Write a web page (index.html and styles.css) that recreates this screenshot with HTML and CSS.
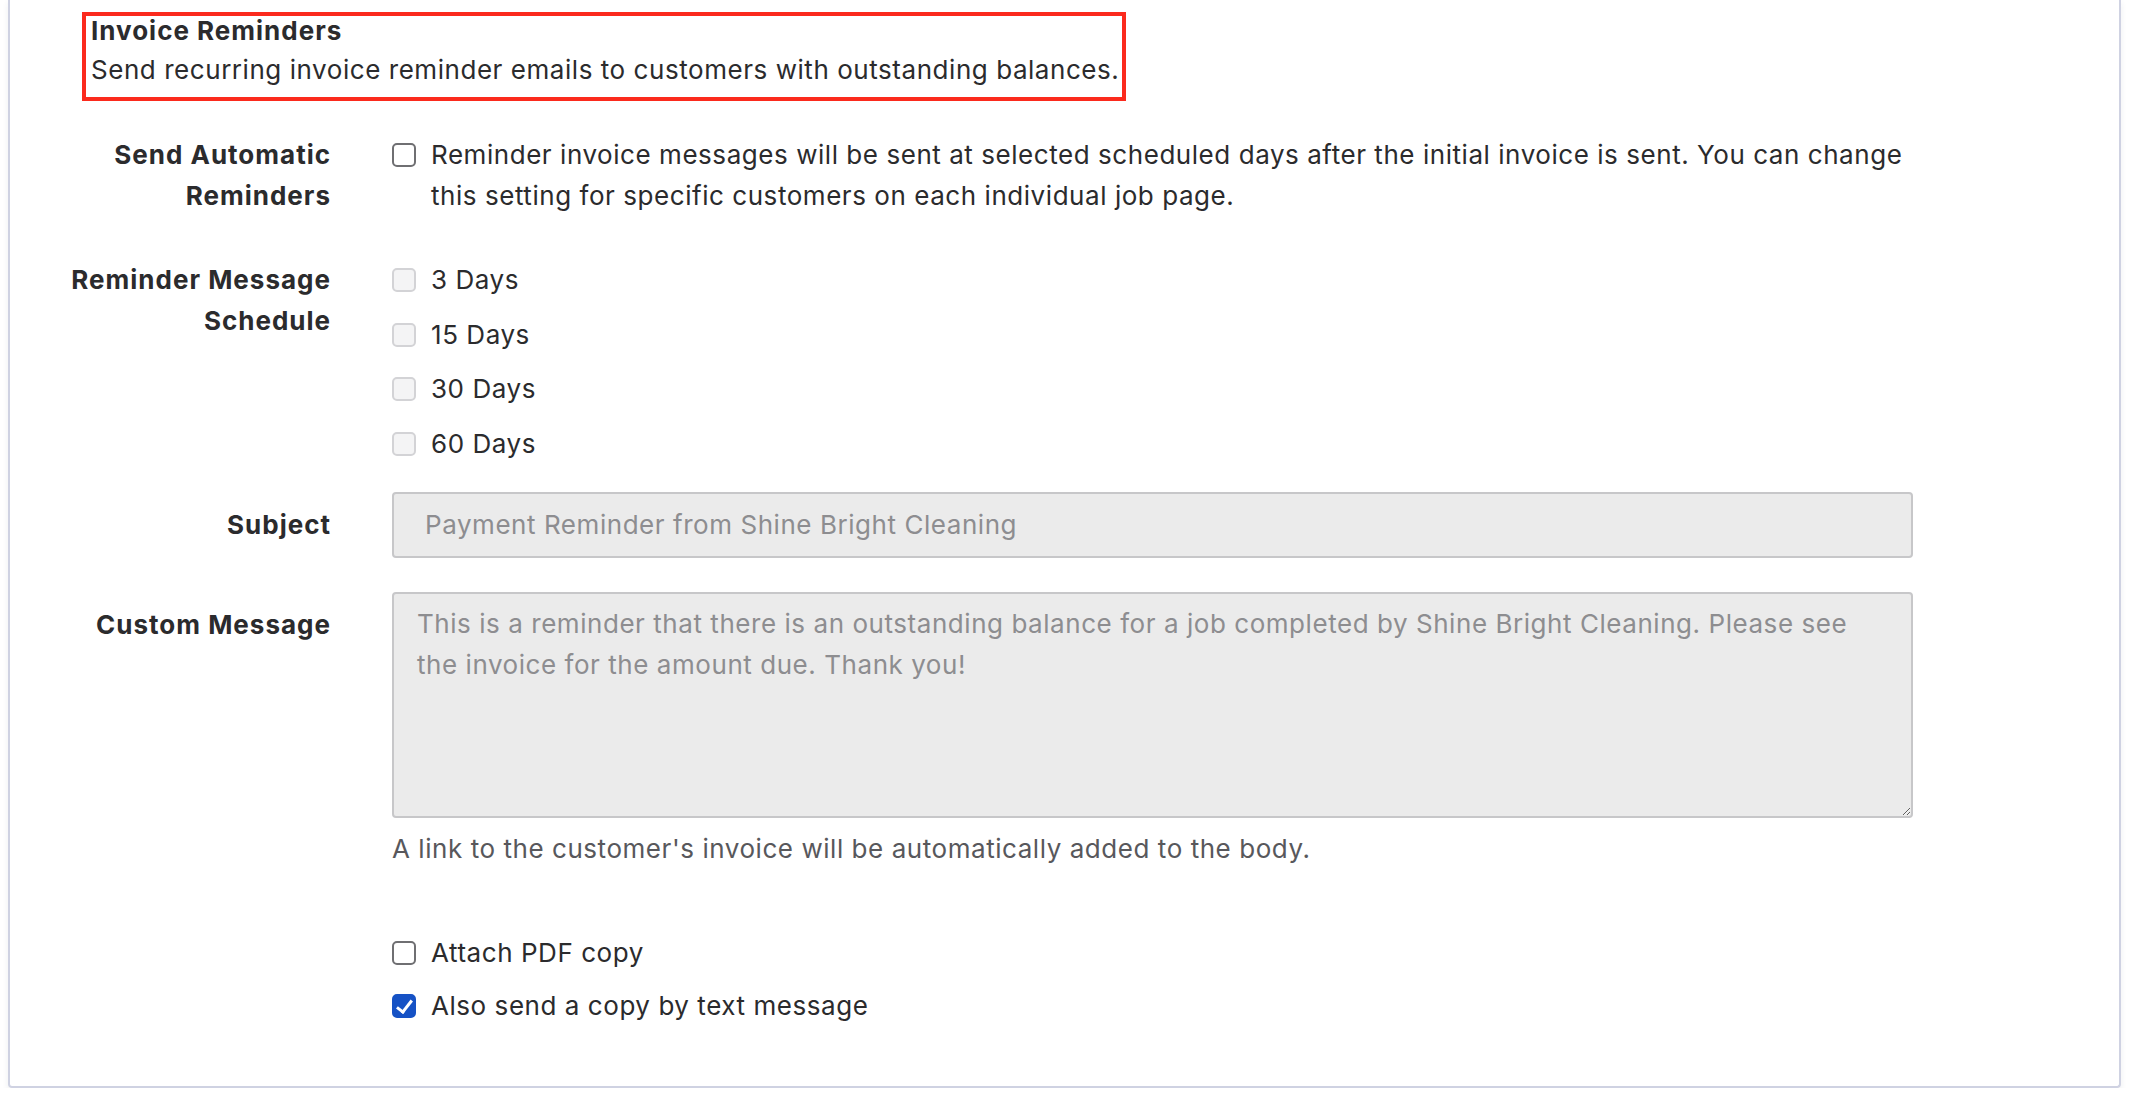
FILE: index.html
```html
<!DOCTYPE html>
<html lang="en">
<head>
    <meta charset="UTF-8">
    <meta name="viewport" content="width=device-width, initial-scale=1">
    <title>Invoice Reminders</title>
    <link rel="stylesheet" href="styles.css">
</head>
<body>
    <div class="card">
        <div class="section-head">
            <h3>Invoice Reminders</h3>
            <p>Send recurring invoice reminder emails to customers with outstanding balances.</p>
        </div>

        <form class="settings">
            <div class="form-row row-auto">
                <label class="row-label">Send Automatic Reminders</label>
                <div class="row-field">
                    <label class="check">
                        <input type="checkbox">
                        <span>Reminder invoice messages will be sent at selected scheduled days after the initial invoice is sent. You can change this setting for specific customers on each individual job page.</span>
                    </label>
                </div>
            </div>

            <div class="form-row row-schedule">
                <label class="row-label">Reminder Message Schedule</label>
                <div class="row-field check-list">
                    <label class="check"><input type="checkbox" disabled><span>3 Days</span></label>
                    <label class="check"><input type="checkbox" disabled><span>15 Days</span></label>
                    <label class="check"><input type="checkbox" disabled><span>30 Days</span></label>
                    <label class="check"><input type="checkbox" disabled><span>60 Days</span></label>
                </div>
            </div>

            <div class="form-row row-subject">
                <label class="row-label padded" for="subject">Subject</label>
                <div class="row-field">
                    <input id="subject" class="text-input" type="text" value="Payment Reminder from Shine Bright Cleaning" readonly>
                </div>
            </div>

            <div class="form-row row-message">
                <label class="row-label padded" for="message">Custom Message</label>
                <div class="row-field">
                    <textarea id="message" class="text-area" readonly>This is a reminder that there is an outstanding balance for a job completed by Shine Bright Cleaning. Please see the invoice for the amount due. Thank you!</textarea>
                    <p class="help">A link to the customer's invoice will be automatically added to the body.</p>
                </div>
            </div>

            <div class="form-row row-extras">
                <div class="row-label"></div>
                <div class="row-field check-list tight">
                    <label class="check"><input type="checkbox"><span>Attach PDF copy</span></label>
                    <label class="check"><input type="checkbox" checked><span>Also send a copy by text message</span></label>
                </div>
            </div>
        </form>
    </div>
</body>
</html>
```

FILE: styles.css
```css
body {
    margin: 0;
    background-color: #fff;
    font-family: Inter, "Noto Sans", sans-serif;
    font-size: 26px;
    line-height: 41px;
    letter-spacing: 0.55px;
    color: #2b2b2d;
}
.card {
    width: 2113px;
    margin-left: 8px;
    padding: 12px 0 60px 0;
    box-sizing: border-box;
    border: 2px solid #cfd2e2;
    border-top: none;
    border-radius: 0 0 4px 4px;
    box-shadow: 0 3px 6px rgba(40, 45, 80, 0.08);
}
.section-head {
    width: fit-content;
    margin-left: 72px;
    padding: 0 3px 7px 5px;
    border: 4px solid #fb2a1d;
}
.section-head h3 {
    margin: 0;
    font-size: 26px;
    line-height: 30px;
    font-weight: 700;
    letter-spacing: 1px;
}
.section-head p {
    margin: 3px 0 0 0;
    line-height: 41px;
}
.settings {
    margin-top: 33px;
    padding-left: 40px;
}
.form-row {
    display: grid;
    grid-template-columns: 281px 1521px;
    column-gap: 61px;
}
.row-label {
    text-align: right;
    font-weight: 700;
    letter-spacing: 1px;
}
.row-label.padded {
    padding-top: 12px;
}
.row-auto {
    margin-bottom: 43px;
}
.row-schedule {
    margin-bottom: 28px;
}
.row-subject {
    margin-bottom: 34px;
}
.row-message {
    margin-bottom: 63px;
}
.check-list {
    display: flex;
    flex-direction: column;
    gap: 13.5px;
}
.check-list.tight {
    gap: 12px;
}
.check {
    display: flex;
    align-items: flex-start;
    gap: 15px;
}
.check input {
    appearance: none;
    -webkit-appearance: none;
    position: relative;
    flex: none;
    width: 24px;
    height: 24px;
    margin: 9px 0 0 0;
    border: 2px solid #6f6f72;
    border-radius: 5px;
    background-color: #fff;
}
.check input:disabled {
    border-color: #d3d3d6;
    background-color: #f4f4f5;
}
.check input:checked {
    border-color: #1652c5;
    background-color: #1652c5;
}
.check input:checked::after {
    content: "";
    position: absolute;
    left: 6px;
    top: 1px;
    width: 6px;
    height: 13px;
    border: solid #fff;
    border-width: 0 3.5px 3.5px 0;
    transform: rotate(38deg);
}
.text-input,
.text-area {
    display: block;
    width: 100%;
    box-sizing: border-box;
    margin: 0;
    border: 2px solid #c7c7c9;
    border-radius: 4px;
    background-color: #ebebeb;
    color: #8d8d90;
    font-family: inherit;
    font-size: 26px;
    line-height: 41px;
    letter-spacing: 0.55px;
    outline: none;
}
.text-input {
    height: 66px;
    padding: 0 20px 0 31px;
}
.text-area {
    height: 226px;
    padding: 9px 40px 0 23px;
    resize: vertical;
}
.help {
    margin: 10px 0 0 0;
    color: #58585c;
}
```
